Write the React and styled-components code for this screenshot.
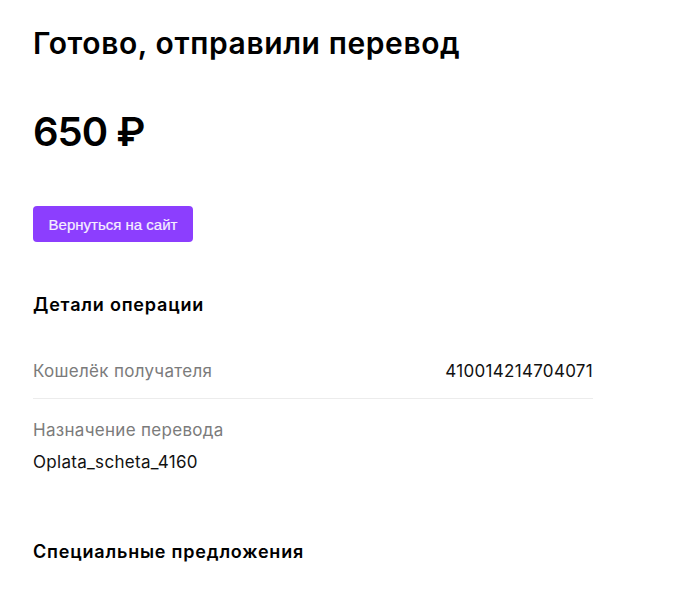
import React from "react";
import styled, { createGlobalStyle } from "styled-components";

const GlobalStyle = createGlobalStyle`
  body {
    margin: 0;
    background: #ffffff;
    font-family: Inter, "Noto Sans", Arial, sans-serif;
    color: #000000;
  }
`;

const Page = styled.div`
  display: flex;
  flex-direction: column;
  align-items: flex-start;
  padding: 25px 0 40px 33px;
  width: 560px;
`;

const Title = styled.h1`
  margin: 0;
  font-size: 30px;
  line-height: 36px;
  font-weight: 600;
  letter-spacing: 0.6px;
`;

const Amount = styled.div`
  margin-top: 47px;
  font-size: 40px;
  line-height: 48px;
  font-weight: 600;
  letter-spacing: -1px;
`;

const BackButton = styled.button`
  margin-top: 50px;
  height: 36px;
  width: 160px;
  padding: 0;
  border: none;
  border-radius: 4px;
  background: #8c3efe;
  color: #f5efff;
  font-family: "Liberation Sans", Arial, sans-serif;
  font-size: 15px;
  -webkit-text-stroke: 0.2px #f5efff;
  cursor: pointer;
`;

const SectionTitle = styled.h2`
  margin: ${(props) => props.margin || "0"};
  font-size: 18px;
  line-height: 24px;
  font-weight: 600;
  letter-spacing: 0.8px;
`;

const DetailsList = styled.div`
  width: 100%;
  margin-top: 42px;
  display: flex;
  flex-direction: column;
`;

const Row = styled.div`
  display: flex;
  flex-direction: ${(props) => (props.stacked ? "column" : "row")};
  justify-content: space-between;
  gap: ${(props) => (props.stacked ? "8px" : "0")};
  padding: ${(props) => props.padding || "0"};
  border-bottom: ${(props) => (props.divider ? "1px solid #ececec" : "none")};
  font-size: 17px;
  line-height: 24px;
  letter-spacing: 0.3px;
`;

const Label = styled.span`
  color: #7b7b7b;
`;

const Value = styled.span`
  color: #111111;
`;

export default function App() {
  return (
    <>
      <GlobalStyle />
      <Page>
        <Title>Готово, отправили перевод</Title>
        <Amount>650 ₽</Amount>
        <BackButton>Вернуться на сайт</BackButton>
        <SectionTitle margin="51px 0 0 0">Детали операции</SectionTitle>
        <DetailsList>
          <Row divider padding="0 0 15px 0">
            <Label>Кошелёк получателя</Label>
            <Value>410014214704071</Value>
          </Row>
          <Row stacked padding="19px 0 0 0">
            <Label>Назначение перевода</Label>
            <Value>Oplata_scheta_4160</Value>
          </Row>
        </DetailsList>
        <SectionTitle margin="66px 0 0 0">Специальные предложения</SectionTitle>
      </Page>
    </>
  );
}
